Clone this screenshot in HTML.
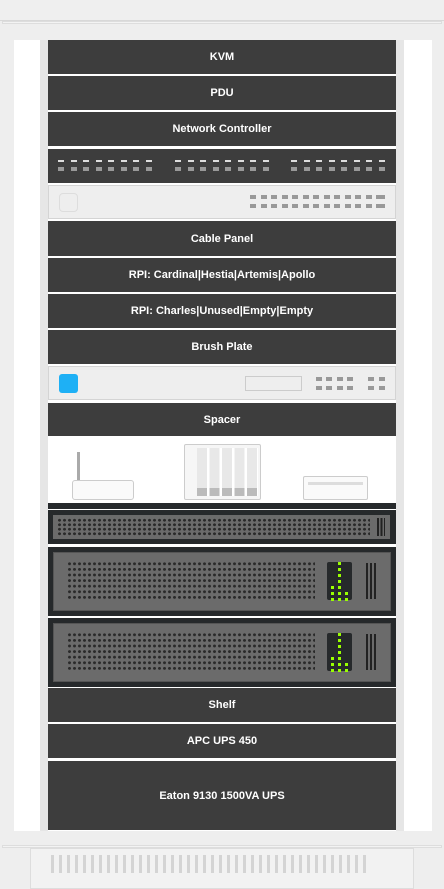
<!DOCTYPE html><html><head><style>
*{margin:0;padding:0;box-sizing:border-box}
body{width:444px;height:889px;background:#eeeeee;position:relative;overflow:hidden;font-family:"Liberation Sans",sans-serif}
.a{position:absolute}
.dk{position:absolute;left:48px;width:348px;background:#3d3d3d;color:#fff;font-weight:bold;font-size:11px;display:flex;align-items:center;justify-content:center}
.rail{position:absolute;top:40px;height:791px;width:8px;background:#e6e6e6}
.port{position:absolute;width:6px;height:4px;background:#999}
.dash{position:absolute;width:6px;height:1.5px;background:#ddd}
.vent{position:absolute;background-image:radial-gradient(circle,#2a2a2a 1.3px,transparent 1.6px);background-size:5px 4.5px}
</style></head><body>
<div class="a" style="left:0;top:0;width:444px;height:20px;background:#efefef"></div>
<div class="a" style="left:0;top:20px;width:444px;height:1px;background:#d8d8d8"></div>
<div class="a" style="left:2px;top:21px;width:440px;height:3px;background:#f3f3f3;border:1px solid #ddd"></div>
<div class="a" style="left:14px;top:40px;width:418px;height:791px;background:#fff"></div>
<div class="rail" style="left:40px"></div><div class="rail" style="left:396px"></div>

<div class="dk" style="top:40px;height:34px">KVM</div>
<div class="dk" style="top:76px;height:34px">PDU</div>
<div class="dk" style="top:112px;height:34px">Network Controller</div>
<div class="dk" style="top:149px;height:34px" id="pp"></div>
<div class="a" style="left:48px;top:185px;width:348px;height:34px;background:#eeeeee;border:1px solid #d4d4d4" id="sw"></div>
<div class="a" style="left:59px;top:193px;width:19px;height:19px;border:1px solid #ddd;border-radius:4px"></div>
<div class="dk" style="top:221px;height:35px">Cable Panel</div>
<div class="dk" style="top:258px;height:34px">RPI: Cardinal|Hestia|Artemis|Apollo</div>
<div class="dk" style="top:294px;height:34px">RPI: Charles|Unused|Empty|Empty</div>
<div class="dk" style="top:330px;height:34px">Brush Plate</div>
<div class="a" style="left:48px;top:366px;width:348px;height:34px;background:#eeeeee;border:1px solid #d4d4d4"></div>
<div class="a" style="left:59px;top:374px;width:19px;height:19px;background:#1eb0f5;border-radius:3px"></div>
<div class="a" style="left:245px;top:376px;width:57px;height:15px;border:1px solid #ccc"></div>
<div class="dk" style="top:403px;height:33px">Spacer</div>

<div class="a" style="left:77px;top:452px;width:3px;height:30px;background:#aaa"></div>
<div class="a" style="left:72px;top:480px;width:62px;height:20px;background:#fafafa;border:1px solid #ccc;border-radius:3px"></div>
<div class="a" style="left:184px;top:444px;width:77px;height:56px;background:#f6f6f6;border:1px solid #ccc;border-radius:2px"></div>
<div class="a" style="left:197px;top:448px;width:61px;height:48px;background:repeating-linear-gradient(90deg,#e8e8e8 0 10px,#fff 10px 12.5px)"></div>
<div class="a" style="left:197px;top:488px;width:61px;height:8px;background:repeating-linear-gradient(90deg,#bbb 0 10px,#fff 10px 12.5px)"></div>
<div class="a" style="left:303px;top:476px;width:65px;height:24px;background:#fafafa;border:1px solid #ccc;border-radius:2px"></div>
<div class="a" style="left:308px;top:482px;width:55px;height:3px;background:#ddd"></div>
<div class="a" style="left:48px;top:503px;width:348px;height:6px;background:#26292b"></div>

<div class="a" style="left:48px;top:510px;width:348px;height:34px;background:#26292b"></div>
<div class="a" style="left:53px;top:515px;width:337px;height:24px;background:#6b6b6b"></div>
<div class="vent" style="left:57px;top:518px;width:313px;height:18px"></div>
<div class="a" style="left:377px;top:518px;width:8px;height:18px;background:repeating-linear-gradient(90deg,#222 0 2px,transparent 2px 3.5px)"></div>

<div class="a" style="left:48px;top:547px;width:348px;height:69px;background:#26292b"></div>
<div class="a" style="left:53px;top:552px;width:338px;height:59px;background:#6b6b6b;border:1px solid #555"></div>
<div class="vent" style="left:67px;top:561px;width:248px;height:40px;background-size:5px 5.6px"></div>
<div class="a" style="left:327px;top:562px;width:25px;height:38px;background:#26292b;border-radius:2px"></div>
<div class="a" style="left:366px;top:563px;width:10px;height:36px;background:repeating-linear-gradient(90deg,#222 0 2px,transparent 2px 4px)"></div>

<div class="a" style="left:48px;top:618px;width:348px;height:69px;background:#26292b"></div>
<div class="a" style="left:53px;top:623px;width:338px;height:59px;background:#6b6b6b;border:1px solid #555"></div>
<div class="vent" style="left:67px;top:632px;width:248px;height:40px;background-size:5px 5.6px"></div>
<div class="a" style="left:327px;top:633px;width:25px;height:38px;background:#26292b;border-radius:2px"></div>
<div class="a" style="left:366px;top:634px;width:10px;height:36px;background:repeating-linear-gradient(90deg,#222 0 2px,transparent 2px 4px)"></div>

<div class="dk" style="top:688px;height:34px">Shelf</div>
<div class="dk" style="top:724px;height:34px">APC UPS 450</div>
<div class="dk" style="top:761px;height:69px">Eaton 9130 1500VA UPS</div>

<div class="a" style="left:2px;top:845px;width:440px;height:3px;background:#f3f3f3;border:1px solid #ddd"></div>
<div class="a" style="left:30px;top:848px;width:384px;height:41px;background:#f2f2f2;border:1px solid #ddd"></div>
<div class="a" style="left:51px;top:855px;width:320px;height:18px;background:repeating-linear-gradient(90deg,#d4d4d4 0 3px,transparent 3px 8px)"></div>

<div id="gen"></div>
<script>
var g='';
function p(x,y){g+='<div class="port" style="left:'+x+'px;top:'+y+'px"></div>';}
[58,175,291].forEach(function(s){for(var i=0;i<8;i++){var x=s+i*12.5;g+='<div class="dash" style="left:'+x+'px;top:160px"></div>';p(x,167);}});
for(var i=0;i<13;i++){p(250+i*10.5,195);p(250+i*10.5,204);}p(379,195);p(379,204);
[316,326,337,347,368,379].forEach(function(x){p(x,377);p(x,386);});
var L=[[331,604],[331,598],[331,592],[338,604],[338,598],[338,592],[338,586],[338,580],[338,574],[338,568],[345,604],[345,598]];
[0,71].forEach(function(o){L.forEach(function(c){g+='<div class="a" style="left:'+c[0]+'px;top:'+(c[1]+o-6)+'px;width:3px;height:3px;background:#9f0"></div>';});});
document.getElementById('gen').innerHTML=g;
</script>
</body></html>
